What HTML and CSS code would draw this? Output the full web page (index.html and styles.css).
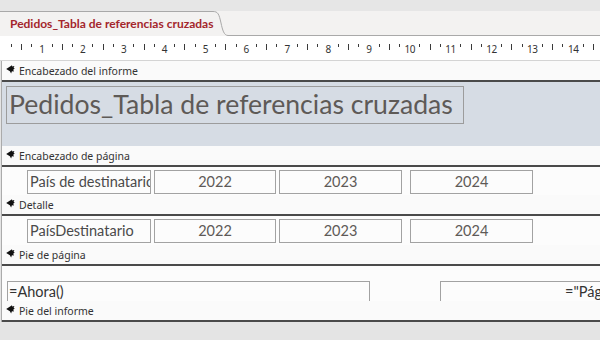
FILE: index.html
```html
<!DOCTYPE html>
<html lang="es">
<head>
<meta charset="utf-8">
<title>Pedidos_Tabla de referencias cruzadas</title>
<link rel="stylesheet" href="styles.css">
</head>
<body>
<div class="topstrip"></div>
<div class="tabrow">
  <div class="tab">Pedidos_Tabla de referencias cruzadas</div>
  <svg class="tabcurve" width="16" height="25" viewBox="0 0 16 25"><path d="M0 0.5 H1 C6 0.5 7 3 9 12 C10.5 19 12 24.5 16 24.5" fill="none" stroke="#a9a9a9" stroke-width="1"/></svg>
  <div class="tabfill"></div>
</div>
<div class="ruler">
  <div class="cm"><span class="slot"><i class="t"></i></span><span class="slot"><i class="T"></i></span><span class="slot"><i class="t"></i></span><span class="slot"><b>1</b></span></div>
  <div class="cm"><span class="slot"><i class="t"></i></span><span class="slot"><i class="T"></i></span><span class="slot"><i class="t"></i></span><span class="slot"><b>2</b></span></div>
  <div class="cm"><span class="slot"><i class="t"></i></span><span class="slot"><i class="T"></i></span><span class="slot"><i class="t"></i></span><span class="slot"><b>3</b></span></div>
  <div class="cm"><span class="slot"><i class="t"></i></span><span class="slot"><i class="T"></i></span><span class="slot"><i class="t"></i></span><span class="slot"><b>4</b></span></div>
  <div class="cm"><span class="slot"><i class="t"></i></span><span class="slot"><i class="T"></i></span><span class="slot"><i class="t"></i></span><span class="slot"><b>5</b></span></div>
  <div class="cm"><span class="slot"><i class="t"></i></span><span class="slot"><i class="T"></i></span><span class="slot"><i class="t"></i></span><span class="slot"><b>6</b></span></div>
  <div class="cm"><span class="slot"><i class="t"></i></span><span class="slot"><i class="T"></i></span><span class="slot"><i class="t"></i></span><span class="slot"><b>7</b></span></div>
  <div class="cm"><span class="slot"><i class="t"></i></span><span class="slot"><i class="T"></i></span><span class="slot"><i class="t"></i></span><span class="slot"><b>8</b></span></div>
  <div class="cm"><span class="slot"><i class="t"></i></span><span class="slot"><i class="T"></i></span><span class="slot"><i class="t"></i></span><span class="slot"><b>9</b></span></div>
  <div class="cm"><span class="slot"><i class="t"></i></span><span class="slot"><i class="T"></i></span><span class="slot"><i class="t"></i></span><span class="slot"><b>10</b></span></div>
  <div class="cm"><span class="slot"><i class="t"></i></span><span class="slot"><i class="T"></i></span><span class="slot"><i class="t"></i></span><span class="slot"><b>11</b></span></div>
  <div class="cm"><span class="slot"><i class="t"></i></span><span class="slot"><i class="T"></i></span><span class="slot"><i class="t"></i></span><span class="slot"><b>12</b></span></div>
  <div class="cm"><span class="slot"><i class="t"></i></span><span class="slot"><i class="T"></i></span><span class="slot"><i class="t"></i></span><span class="slot"><b>13</b></span></div>
  <div class="cm"><span class="slot"><i class="t"></i></span><span class="slot"><i class="T"></i></span><span class="slot"><i class="t"></i></span><span class="slot"><b>14</b></span></div>
  <div class="cm"><span class="slot"><i class="t"></i></span><span class="slot"><i class="T"></i></span><span class="slot"><i class="t"></i></span><span class="slot"></span></div>
</div>
<div class="design">
  <div class="bar"><svg class="ico" width="9" height="9" viewBox="0 0 9 9"><path d="M0.2 4 L6 0.2 L6.2 1.6 L8.4 0.9 L7.6 2.9 L8.8 3.6 L7.2 4.7 L8 6.4 L5.9 6.2 L5.1 8.4 L3.9 6.2 Z" fill="#111"/></svg>Encabezado del informe</div>
  <div class="band band-rh">
    <div class="title">Pedidos_Tabla de referencias cruzadas</div>
  </div>
  <div class="bar"><svg class="ico" width="9" height="9" viewBox="0 0 9 9"><path d="M0.2 4 L6 0.2 L6.2 1.6 L8.4 0.9 L7.6 2.9 L8.8 3.6 L7.2 4.7 L8 6.4 L5.9 6.2 L5.1 8.4 L3.9 6.2 Z" fill="#111"/></svg>Encabezado de página</div>
  <div class="band band-ph">
    <div class="row">
      <div class="box first">País de destinatario</div>
      <div class="box year">2022</div>
      <div class="box year y3">2023</div>
      <div class="box year last">2024</div>
    </div>
  </div>
  <div class="bar"><svg class="ico" width="9" height="9" viewBox="0 0 9 9"><path d="M0.2 4 L6 0.2 L6.2 1.6 L8.4 0.9 L7.6 2.9 L8.8 3.6 L7.2 4.7 L8 6.4 L5.9 6.2 L5.1 8.4 L3.9 6.2 Z" fill="#111"/></svg>Detalle</div>
  <div class="band band-d">
    <div class="row">
      <div class="box first">PaísDestinatario</div>
      <div class="box year">2022</div>
      <div class="box year y3">2023</div>
      <div class="box year last">2024</div>
    </div>
  </div>
  <div class="bar"><svg class="ico" width="9" height="9" viewBox="0 0 9 9"><path d="M0.2 4 L6 0.2 L6.2 1.6 L8.4 0.9 L7.6 2.9 L8.8 3.6 L7.2 4.7 L8 6.4 L5.9 6.2 L5.1 8.4 L3.9 6.2 Z" fill="#111"/></svg>Pie de página</div>
  <div class="band band-pf">
    <div class="frow">
      <div class="fbox now">=Ahora()</div>
      <div class="fbox page">="Página " &amp; [Página] &amp; " de " &amp; [Páginas]</div>
    </div>
  </div>
  <div class="bar"><svg class="ico" width="9" height="9" viewBox="0 0 9 9"><path d="M0.2 4 L6 0.2 L6.2 1.6 L8.4 0.9 L7.6 2.9 L8.8 3.6 L7.2 4.7 L8 6.4 L5.9 6.2 L5.1 8.4 L3.9 6.2 Z" fill="#111"/></svg>Pie del informe</div>
</div>
</body>
</html>
```
FILE: styles.css
```css
html, body {
  margin: 0;
  padding: 0;
}
body {
  width: 600px;
  height: 340px;
  overflow: hidden;
  background: #e4e4e4;
  font-family: "Noto Sans", "Open Sans", sans-serif;
}
.topstrip {
  height: 11px;
  background: #e6e6e6;
}
.tabrow {
  height: 25px;
  display: flex;
  background: #f3f2f1;
}
.tab {
  box-sizing: border-box;
  width: 212px;
  height: 25px;
  border-top: 1px solid #a9a9a9;
  padding-left: 10px;
  font-family: Lato, sans-serif;
  font-weight: bold;
  font-size: 12px;
  line-height: 23px;
  color: #a4262c;
  white-space: nowrap;
}
.tabcurve {
  flex: 0 0 16px;
  display: block;
}
.tabfill {
  flex: 1;
  border-bottom: 1px solid #a9a9a9;
}
.ruler {
  height: 24px;
  background: #fff;
  border-bottom: 1px solid #d4d4d4;
  display: flex;
  padding-left: 6px;
  overflow: hidden;
}
.cm {
  flex: 0 0 40.9px;
  display: flex;
}
.slot {
  flex: 1;
  display: flex;
  justify-content: center;
  align-items: flex-start;
}
.slot i {
  display: block;
  width: 1px;
  background: #3a3a3a;
  margin-top: 8px;
}
.slot i.t { height: 3px; }
.slot i.T { height: 6px; }
.slot b {
  font-weight: normal;
  font-family: "Noto Sans", sans-serif;
  font-size: 10px;
  line-height: 12px;
  margin-top: 7px;
  color: #333;
  letter-spacing: -0.5px;
}
.design {
  margin-left: 1px;
  border-left: 1px solid #ababab;
}
.bar {
  height: 19px;
  border-bottom: 2px solid #4a4a4a;
  background: #fafafa;
  display: flex;
  align-items: center;
  padding-left: 4px;
  font-family: "Noto Sans", sans-serif;
  font-size: 10.5px;
  color: #333;
  white-space: nowrap;
}
.ico {
  display: block;
  margin-right: 4px;
  margin-top: -2px;
}
.band {
  overflow: hidden;
  box-sizing: border-box;
}
.band-rh {
  height: 64px;
  background: #d6dce4;
  padding: 4px 0 0 4px;
}
.title {
  box-sizing: border-box;
  width: 458px;
  height: 38px;
  border: 1px solid #9c9c9c;
  padding-left: 2px;
  font-family: Lato, sans-serif;
  font-size: 26.6px;
  line-height: 34px;
  color: #5e5a57;
  white-space: nowrap;
}
.band-ph, .band-d {
  background: #fcfcfc;
  padding: 3px 0 0 25px;
}
.band-ph { height: 28px; }
.band-d { height: 29px; }
.row {
  display: flex;
}
.box {
  box-sizing: border-box;
  height: 24px;
  border: 1px solid #a2a2a2;
  font-family: Lato, sans-serif;
  font-size: 14.5px;
  line-height: 22px;
  color: #4a4a4a;
  white-space: nowrap;
  overflow: hidden;
  margin-right: 3px;
  flex: none;
}
.box.first {
  width: 124px;
  padding-left: 2px;
}
.box.year {
  width: 122px;
  text-align: center;
  color: #5e5a57;
}
.box.y3 {
  width: 123px;
}
.box.last {
  width: 123px;
  margin-left: 5px;
}
.band-pf {
  height: 35px;
  background: #fcfcfc;
  padding: 15px 0 0 5px;
}
.frow {
  display: flex;
}
.fbox {
  box-sizing: border-box;
  height: 24px;
  border: 1px solid #a2a2a2;
  font-family: Lato, sans-serif;
  font-size: 14.5px;
  line-height: 20px;
  color: #333;
  white-space: nowrap;
  flex: none;
}
.fbox.now {
  width: 363px;
  padding-left: 1px;
}
.fbox.page {
  margin-left: 70px;
  width: 400px;
  padding-left: 124px;
  color: #333;
}
```
